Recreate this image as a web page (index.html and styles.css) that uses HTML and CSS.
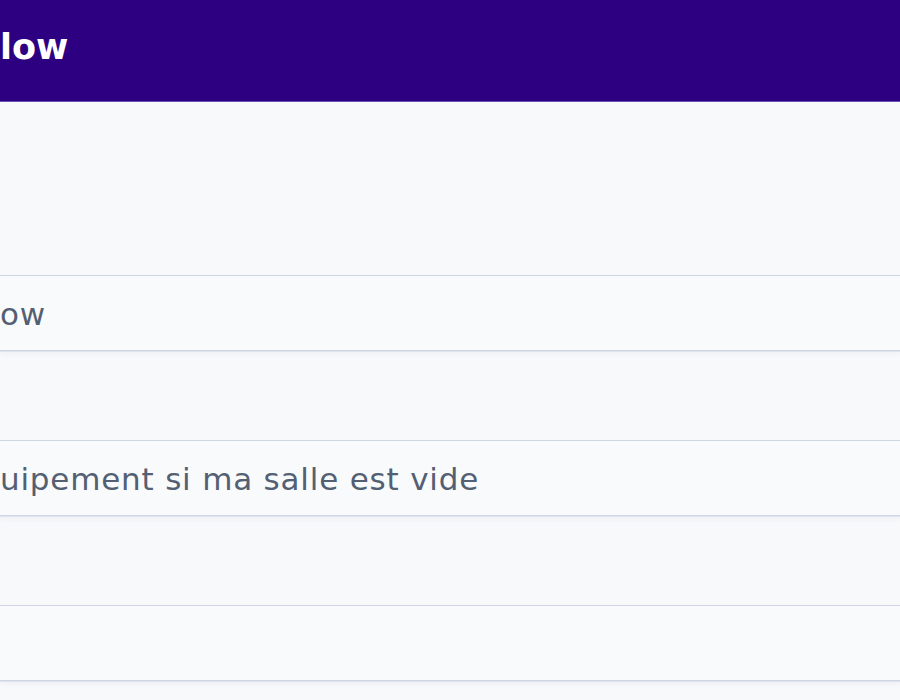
FILE: index.html
```html
<!DOCTYPE html>
<html lang="fr">
<head>
<meta charset="utf-8">
<title>Flow</title>
<link rel="stylesheet" href="styles.css">
</head>
<body>
<header class="topbar">
  <h1 class="topbar-title">low</h1>
</header>
<main class="form">
  <div class="field"><span class="field-value">ow</span></div>
  <div class="field"><span class="field-value">uipement si ma salle est vide</span></div>
  <div class="field"><span class="field-value"></span></div>
</main>
</body>
</html>
```
FILE: styles.css
```css
html, body {
  margin: 0;
  padding: 0;
}
body {
  background: #f8f9fb;
  font-family: "DejaVu Sans", "Liberation Sans", sans-serif;
  overflow: hidden;
  width: 900px;
  height: 700px;
}
.topbar {
  height: 102px;
  background: #2d0082;
  border-bottom: 1px solid #6a52b3;
  display: flex;
  align-items: center;
  box-sizing: border-box;
}
.topbar-title {
  margin: 0;
  color: #ffffff;
  font-size: 35px;
  font-weight: 700;
  letter-spacing: 0;
  padding-bottom: 8px;
}
.form {
  padding-top: 173px;
  display: flex;
  flex-direction: column;
  gap: 89px;
}
.field {
  height: 76px;
  box-sizing: border-box;
  border-top: 1px solid #cfd6e3;
  border-bottom: 1px solid #cfd6e3;
  background: #f9fafc;
  box-shadow: 0 1px 0 #dfe4ee, 0 3px 6px rgba(40, 60, 100, 0.05);
  display: flex;
  align-items: center;
}
.field-value {
  color: #535f73;
  font-size: 31px;
  font-weight: 400;
  letter-spacing: 0.8px;
  padding-top: 2px;
}
```
